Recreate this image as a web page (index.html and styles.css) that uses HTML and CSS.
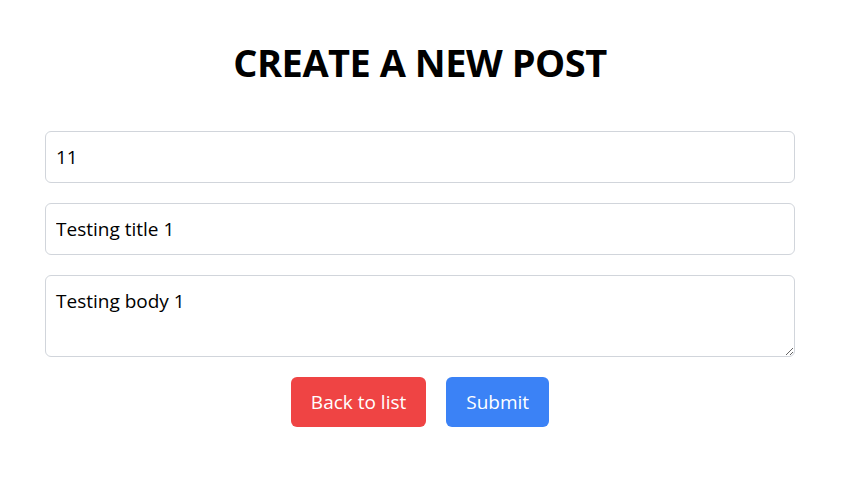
FILE: index.html
```html
<!DOCTYPE html>
<html lang="en">
<head>
<meta charset="utf-8">
<title>Create a new post</title>
<link rel="stylesheet" href="styles.css">
</head>
<body>
<main class="page">
  <h1 class="title">CREATE A NEW POST</h1>
  <form class="post-form">
    <input class="field" type="text" value="11">
    <input class="field" type="text" value="Testing title 1">
    <textarea class="field field-area">Testing body 1</textarea>
    <div class="actions">
      <button type="button" class="btn btn-back">Back to list</button>
      <button type="submit" class="btn btn-submit">Submit</button>
    </div>
  </form>
</main>
</body>
</html>
```
FILE: styles.css
```css
* { box-sizing: border-box; }
html, body { margin: 0; padding: 0; background: #ffffff; }
body {
  font-family: "Open Sans", "Noto Sans", "Liberation Sans", sans-serif;
  color: #000000;
}
.page {
  width: 750px;
  margin-left: 45px;
  padding-top: 38px;
}
.title {
  margin: 0 0 45px 0;
  font-size: 38px;
  line-height: 48px;
  font-weight: 700;
  text-align: center;
  letter-spacing: -0.5px;
}
.post-form {
  display: flex;
  flex-direction: column;
  gap: 20px;
}
.field {
  display: block;
  width: 100%;
  height: 52px;
  padding: 11px 10px;
  font-family: inherit;
  font-size: 19px;
  line-height: 28px;
  color: #000000;
  background: #ffffff;
  border: 1px solid #d1d5db;
  border-radius: 6px;
  outline: none;
}
.field-area {
  height: 82px;
  resize: vertical;
}
.actions {
  display: flex;
  justify-content: center;
  gap: 20px;
}
.btn {
  height: 50px;
  padding: 0 20px;
  font-family: inherit;
  font-size: 19px;
  line-height: 28px;
  color: #ffffff;
  border: none;
  border-radius: 6px;
  cursor: pointer;
}
.btn-back { background: #ef4444; }
.btn-submit { background: #3b82f6; }
```
